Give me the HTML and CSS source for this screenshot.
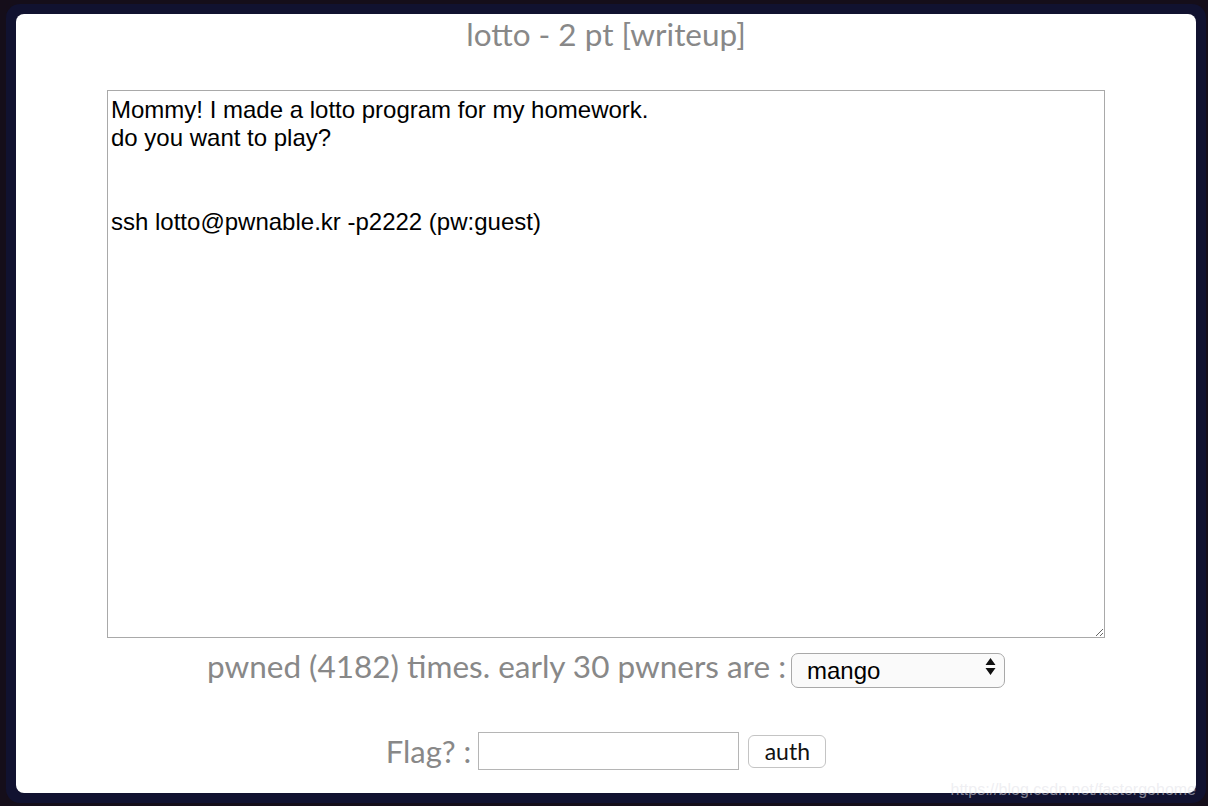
FILE: index.html
```html
<!DOCTYPE html>
<html>
<head>
<meta charset="utf-8">
<link rel="stylesheet" href="styles.css">
</head>
<body>
<div class="frame">
  <div class="panel">
    <h1 class="title">lotto - 2 pt [writeup]</h1>
    <textarea class="desc" readonly>Mommy! I made a lotto program for my homework.
do you want to play?


ssh lotto@pwnable.kr -p2222 (pw:guest)</textarea>
    <div class="stats">
      <span>pwned (4182) times. early 30 pwners are :</span>
      <div class="select-wrap">
        <select class="pwners"><option>mango</option></select>
        <svg class="arrows" width="11" height="19" viewBox="0 0 11 19"><path d="M5.5 1 L10.5 8 H0.5 Z M5.5 18 L10.5 11 H0.5 Z" fill="#111"/></svg>
      </div>
    </div>
    <div class="flag">
      <span>Flag? :</span>
      <input class="flag-input" type="text">
      <button class="auth">auth</button>
    </div>
  </div>
  <div class="watermark">https://blog.csdn.net/fastergohome</div>
</div>
</body>
</html>
```
FILE: styles.css
```css
html, body {
  margin: 0;
  padding: 0;
}
body {
  background: #150e1a;
  width: 1208px;
  height: 806px;
  box-sizing: border-box;
  padding: 4px 2px 3px 6px;
  overflow: hidden;
}
.frame {
  position: relative;
  background: #111230;
  border-radius: 14px;
  padding: 10px;
  height: 799px;
  box-sizing: border-box;
}
.panel {
  background: #fff;
  border-radius: 8px;
  height: 779px;
  display: flex;
  flex-direction: column;
  align-items: center;
  font-family: Lato, "Liberation Sans", sans-serif;
  color: #888;
}
.title {
  margin: 0;
  padding-top: 0;
  font-size: 31.5px;
  font-weight: normal;
  line-height: 40px;
  color: #888;
}
.desc {
  margin-top: 36px;
  width: 998px;
  height: 548px;
  box-sizing: border-box;
  border: 1px solid #a9a9a9;
  padding: 5px 3px 3px;
  font-family: "Liberation Sans", Arial, sans-serif;
  font-size: 24px;
  line-height: 28px;
  color: #000;
  resize: both;
  outline: none;
}
.stats {
  margin-top: 10px;
  display: flex;
  align-items: center;
  gap: 5px;
  font-size: 31.5px;
  line-height: 36px;
}
.select-wrap {
  position: relative;
  width: 214px;
  height: 35px;
}
.pwners {
  -webkit-appearance: none;
  appearance: none;
  width: 214px;
  height: 35px;
  box-sizing: border-box;
  border: 1px solid #a9a9a9;
  border-radius: 7px;
  background: #fafafa;
  padding: 0 0 0 15px;
  font-family: "Liberation Sans", Arial, sans-serif;
  font-size: 24px;
  color: #000;
}
.arrows {
  position: absolute;
  right: 9px;
  top: 8px;
}
.flag {
  margin-top: 48px;
  display: flex;
  align-items: center;
  font-size: 31px;
  line-height: 38px;
}
.flag-input {
  margin-left: 7px;
  width: 261px;
  height: 38px;
  box-sizing: border-box;
  border: 1px solid #b5b5b5;
  padding: 2px 4px;
  font-size: 20px;
}
.auth {
  margin-left: 9px;
  width: 78px;
  height: 33px;
  box-sizing: border-box;
  border: 1px solid #c4c4c4;
  border-radius: 6px;
  background: #fff;
  font-family: Lato, "Liberation Sans", sans-serif;
  font-size: 23px;
  color: #111;
  padding: 0;
}
.watermark {
  position: absolute;
  right: 10px;
  bottom: 4px;
  font-family: "Liberation Sans", Arial, sans-serif;
  font-size: 16px;
  color: rgba(225, 225, 232, 0.55);
}
```
